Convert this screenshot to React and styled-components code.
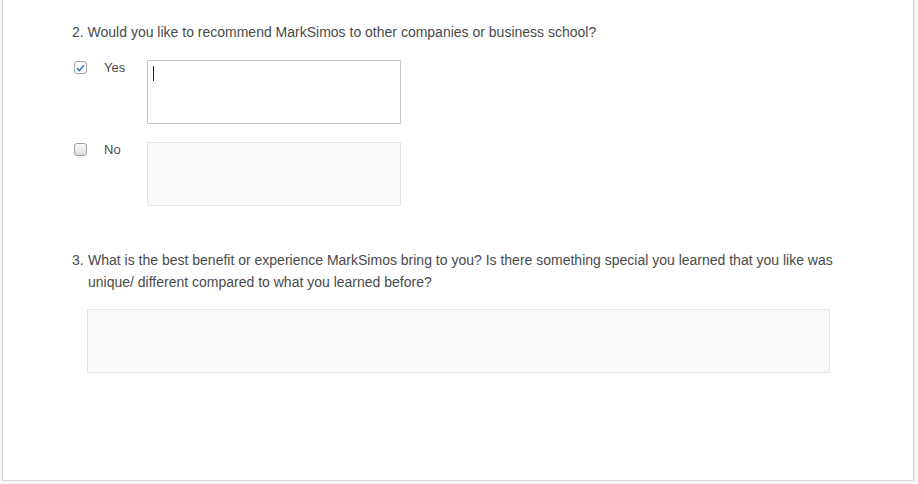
import React from 'react'
import styled, { createGlobalStyle } from 'styled-components'

const Global = createGlobalStyle`
  html, body {
    margin: 0;
    padding: 0;
    background: #f7f7f7;
  }
  body {
    font-family: "Liberation Sans", Arial, sans-serif;
    color: #4a4a4a;
  }
`

const Panel = styled.div`
  box-sizing: border-box;
  margin-left: 2px;
  width: 912px;
  height: 481px;
  background: #fff;
  border: 1px solid #d9d9d9;
  border-top: 0;
  box-shadow: 0 2px 2px rgba(0, 0, 0, 0.12);
  padding: 21px 0 0 69px;
`

const Question = styled.div`
  display: flex;
  font-size: 14px;
  line-height: 22px;
  width: 780px;
  margin-top: ${p => p.$top || 0}px;
`

const Num = styled.span`
  flex: 0 0 16px;
`

const Options = styled.div`
  display: flex;
  flex-direction: column;
  gap: 18px;
  margin-top: 17px;
`

const Row = styled.div`
  display: flex;
  align-items: flex-start;
`

const Box = styled.span`
  box-sizing: border-box;
  width: 13px;
  height: 13px;
  margin: 1px 0 0 2px;
  border: 1px solid #a3a3a3;
  border-radius: 3px;
  background: ${p => (p.$checked ? '#fdfdfd' : 'linear-gradient(#fafafa, #dcdcdc)')};
  display: flex;
  align-items: center;
  justify-content: center;
`

const Label = styled.span`
  width: 43px;
  margin: 1px 0 0 17px;
  font-size: 13px;
  line-height: 14px;
`

const Field = styled.div`
  position: relative;
`

const Area = styled.textarea`
  box-sizing: border-box;
  display: block;
  width: ${p => p.$w}px;
  height: 64px;
  margin: 0;
  border: 1px solid ${p => (p.$active ? '#c4c4c4' : '#e3e3e3')};
  border-radius: 1px;
  background: ${p => (p.$active ? '#fff' : '#fafafa')};
  resize: none;
  outline: none;
  font-family: inherit;
`

const Caret = styled.span`
  position: absolute;
  left: 6px;
  top: 6px;
  width: 1px;
  height: 15px;
  background: #222;
`

const Check = () => (
  <svg width="9" height="8" viewBox="0 0 9 8">
    <path d="M1 4.2 L3.4 6.5 L8 1.2" fill="none" stroke="#3a78e0" strokeWidth="1.6" />
  </svg>
)

const Option = ({ label, checked }) => (
  <Row>
    <Box $checked={checked}>{checked && <Check />}</Box>
    <Label>{label}</Label>
    <Field>
      <Area $w={254} $active={checked} />
      {checked && <Caret />}
    </Field>
  </Row>
)

const Big = styled.div`
  margin: 16px 0 0 15px;
`

export default function App () {
  return (
    <>
      <Global />
      <Panel>
        <Question>
          <span>2. Would you like to recommend MarkSimos to other companies or business school?</span>
        </Question>
        <Options>
          <Option label='Yes' checked />
          <Option label='No' />
        </Options>
        <Question $top={43}>
          <Num>3.</Num>
          <span>What is the best benefit or experience MarkSimos bring to you? Is there something special you learned that you like was unique/ different compared to what you learned before?</span>
        </Question>
        <Big>
          <Area $w={743} />
        </Big>
      </Panel>
    </>
  )
}
